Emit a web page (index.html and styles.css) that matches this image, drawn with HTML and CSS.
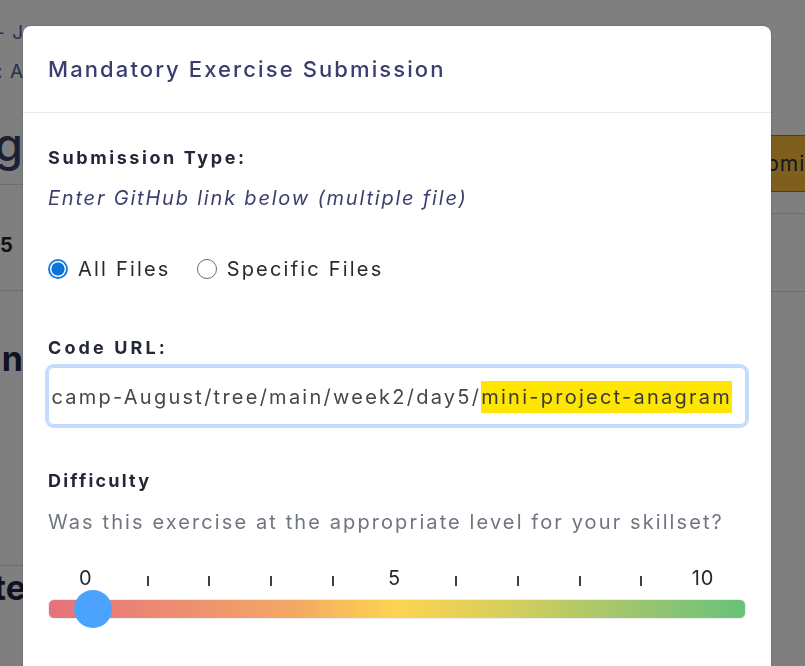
FILE: index.html
```html
<!DOCTYPE html>
<html lang="en">
<head>
<meta charset="utf-8">
<title>Mandatory Exercise Submission</title>
<link rel="stylesheet" href="styles.css">
</head>
<body>
<div class="page">
  <div class="page-left">
    <div class="crumb crumb-1"><span>Week 2 - J</span></div>
    <div class="crumb crumb-2"><span>Due: A</span></div>
    <div class="page-title"><span>g</span></div>
    <div class="row-stat"><span>5</span></div>
    <div class="section-title"><span>n</span></div>
    <div class="section-title section-bottom"><span>ate</span></div>
  </div>
  <div class="page-right">
    <div class="submit-btn">Submit</div>
    <div class="right-row"></div>
  </div>
</div>

<div class="overlay">
  <div class="modal">
    <div class="modal-header">
      <h2 class="modal-title">Mandatory Exercise Submission</h2>
    </div>
    <div class="modal-body">
      <div class="label label-type">Submission Type:</div>
      <div class="hint">Enter GitHub link below (multiple file)</div>
      <div class="radios">
        <label class="radio"><span class="radio-dot checked"></span><span>All Files</span></label>
        <label class="radio"><span class="radio-dot"></span><span>Specific Files</span></label>
      </div>
      <div class="label label-url">Code URL:</div>
      <div class="url-input">
        <span class="url-text">https://github.com/student/Bootcamp-August/tree/main/week2/day5/<mark class="sel">mini-project-anagram</mark></span>
      </div>
      <div class="label label-diff">Difficulty</div>
      <div class="question">Was this exercise at the appropriate level for your skillset?</div>
      <div class="scale">
        <span class="num">0</span>
        <span class="tick"></span>
        <span class="tick"></span>
        <span class="tick"></span>
        <span class="tick"></span>
        <span class="num">5</span>
        <span class="tick"></span>
        <span class="tick"></span>
        <span class="tick"></span>
        <span class="tick"></span>
        <span class="num">10</span>
      </div>
      <div class="track">
        <span class="thumb"></span>
      </div>
    </div>
  </div>
</div>
</body>
</html>
```

FILE: styles.css
```css
* { box-sizing: border-box; }

html, body {
  margin: 0;
  padding: 0;
  height: 100%;
  overflow: hidden;
  background: #ffffff;
  font-family: Inter, "Noto Sans", sans-serif;
}

/* ---------- page behind the dialog ---------- */
.page {
  display: flex;
  justify-content: space-between;
  height: 100%;
}

.page-left {
  width: 60px;
  display: flex;
  flex-direction: column;
}

.page-left > div {
  display: flex;
  justify-content: flex-end;
  overflow: hidden;
  white-space: nowrap;
  width: 60px;
}

.crumb {
  font-size: 19px;
  color: #4c5fb0;
  height: 30px;
  line-height: 30px;
  margin-left: -36px;
  letter-spacing: 1px;
}
.crumb-1 { margin-top: 18px; }
.crumb-2 { margin-top: 9px; }

.page-title {
  margin-left: -37px;
  margin-top: 28px;
  font-size: 46px;
  font-weight: 500;
  color: #35406a;
  height: 70px;
  line-height: 58px;
  border-bottom: 1px solid #dddddd;
}

.page-left > .row-stat {
  margin-left: 0;
  width: 100%;
  justify-content: flex-start;
  height: 106px;
  padding-top: 48px;
  font-size: 20px;
  font-weight: 700;
  color: #222222;
  line-height: 24px;
  border-bottom: 1px solid #dddddd;
}

.section-title {
  margin-left: -37px;
  font-size: 34px;
  font-weight: 700;
  color: #1f2440;
  height: 275px;
  padding-top: 48px;
  line-height: 40px;
  border-bottom: 1px solid #dddddd;
}

.page-left > .section-bottom {
  margin-left: -34px;
  height: 60px;
  padding-top: 2px;
  border-bottom: none;
}

.page-right {
  width: 60px;
  display: flex;
  flex-direction: column;
}

.submit-btn {
  margin-top: 135px;
  margin-left: 8px;
  width: 110px;
  height: 57px;
  background: #fdbf3d;
  border: 1px solid #e0563a;
  color: #233040;
  font-size: 21px;
  line-height: 55px;
  text-indent: -16px;
  letter-spacing: 1px;
  white-space: nowrap;
}

.right-row {
  margin-top: 21px;
  height: 79px;
  border-top: 1px solid #dddddd;
  border-bottom: 1px solid #dddddd;
}

/* ---------- overlay + dialog ---------- */
.overlay {
  position: fixed;
  inset: 0;
  background: rgba(0, 0, 0, 0.5);
  padding: 26px 0 0 23px;
}

.modal {
  width: 748px;
  height: 700px;
  background: #ffffff;
  border-radius: 8px;
  box-shadow: 0 0 2px rgba(0, 0, 0, 0.35);
}

.modal-header {
  height: 87px;
  padding: 0 25px;
  display: flex;
  align-items: center;
  border-bottom: 1px solid #e6e8ee;
}

.modal-title {
  margin: 0;
  font-size: 22px;
  font-weight: 500;
  color: #3a3d6e;
  letter-spacing: 2.1px;
}

.modal-body {
  padding: 33px 25px 0 25px;
}

.label {
  font-size: 18px;
  font-weight: 700;
  color: #222835;
  line-height: 24px;
}

.label-type { letter-spacing: 2.6px; }

.hint {
  margin-top: 14px;
  font-size: 20px;
  font-style: italic;
  color: #3c3f6e;
  line-height: 28px;
  letter-spacing: 1.8px;
}

.radios {
  margin-top: 43px;
  display: flex;
  gap: 26px;
  height: 28px;
  align-items: center;
}

.radio {
  display: flex;
  align-items: center;
  gap: 10px;
  font-size: 20px;
  color: #2a2a2a;
  line-height: 28px;
  letter-spacing: 2.2px;
}

.radio-dot {
  width: 20px;
  height: 20px;
  border-radius: 50%;
  border: 1.5px solid #6b6b6b;
  background: #ffffff;
  flex: none;
}

.radio-dot.checked {
  border: 2px solid #1a7fe0;
  background: radial-gradient(circle, #0a74d8 0 6.3px, #ffffff 6.8px);
}

.label-url {
  margin-top: 53px;
  letter-spacing: 3.1px;
}

.url-input {
  margin-top: 7px;
  height: 58px;
  border: 1px solid #bdd9fb;
  border-radius: 6px;
  box-shadow: 0 0 0 3px #c3ddfc;
  display: flex;
  justify-content: flex-end;
  align-items: center;
  overflow: hidden;
  padding-right: 15px;
  white-space: nowrap;
}

.url-text {
  font-size: 20px;
  color: #474747;
  line-height: 37px;
  letter-spacing: 2.25px;
  margin-top: 3px;
}

.sel {
  background: #ffe600;
  color: #3a3a3a;
  padding: 4px 0 4px 0;
  margin-right: -2px;
}

.label-diff {
  margin-top: 44px;
  letter-spacing: 2.2px;
}

.question {
  margin-top: 15px;
  font-size: 20px;
  color: #6f7580;
  line-height: 28px;
  letter-spacing: 2.1px;
}

.scale {
  margin-top: 30px;
  margin-left: 7px;
  width: 679px;
  display: grid;
  grid-template-columns: repeat(11, 1fr);
  align-items: end;
  justify-items: center;
  height: 24px;
}

.num {
  font-size: 20px;
  color: #252a35;
  line-height: 24px;
  letter-spacing: 1px;
}

.tick {
  width: 2px;
  height: 10px;
  background: #3a3f4a;
  margin-bottom: 4px;
}

.track {
  margin-top: 9px;
  height: 20px;
  border-radius: 6px;
  border: 1px solid #eceef2;
  background: linear-gradient(to right, #e6717b 0%, #ed8d70 18%, #f3a865 35%, #fdd44f 50%, #d9cf5c 65%, #a9c76a 80%, #69c17c 100%);
  position: relative;
}

.thumb {
  position: absolute;
  left: 25px;
  top: -10px;
  width: 38px;
  height: 38px;
  border-radius: 50%;
  background: #4ca3fd;
}
```
